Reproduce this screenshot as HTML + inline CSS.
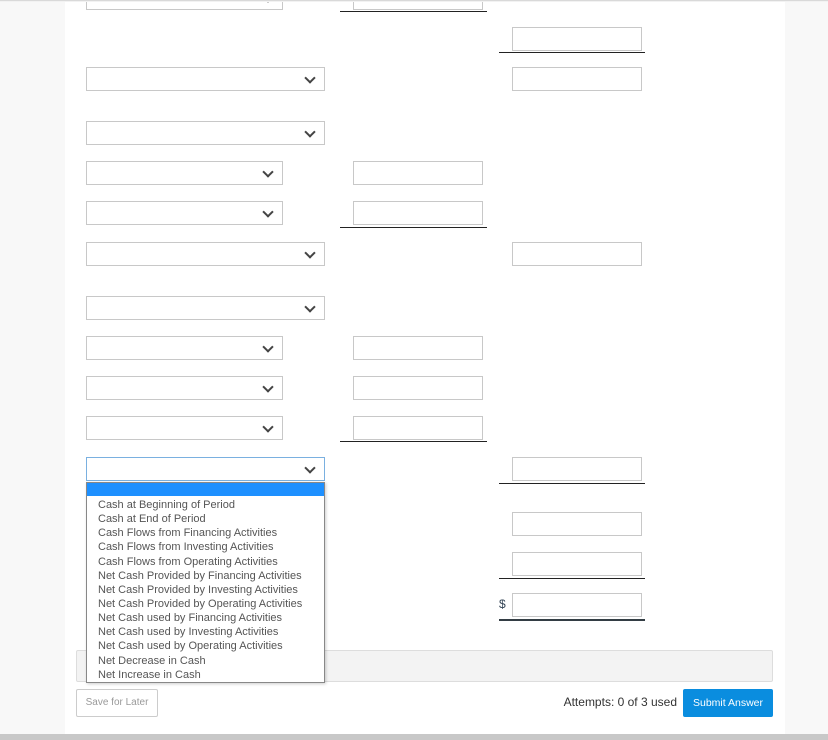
<!DOCTYPE html>
<html><head><style>
body{margin:0;width:828px;height:740px;background:#f8f8f8;position:relative;overflow:hidden;font-family:"Liberation Sans",sans-serif}
.main{position:absolute;left:65px;top:0;width:720px;height:734px;background:#fff}
.bb{position:absolute;left:0;top:734px;width:828px;height:6px;background:#c8c8c8}
.top{position:absolute;left:0;top:0;width:828px;height:2px;background:linear-gradient(#ccc,#fff)}
.s,.i{position:absolute;box-sizing:border-box;height:24px;border:1px solid #c8c8c8;background:#fff}
.s::after{content:"";position:absolute;right:10px;top:6px;width:6px;height:6px;border-right:2px solid #444;border-bottom:2px solid #444;transform:rotate(45deg)}
.sw{left:86px;width:239px}.sn{left:86px;width:197px}
.im{left:353px;width:130px}.ir{left:512px;width:130px}
.l{position:absolute;height:1px;background:#222}
.lm{left:340px;width:147px}.lr{left:499px;width:146px}
.dd{position:absolute;left:86px;top:482px;width:239px;height:201px;box-sizing:border-box;border:1px solid #888;background:#fff;font-size:11px;color:#555;box-shadow:1px 1px 3px rgba(0,0,0,.2)}
.dd div{height:14.15px;line-height:14px;padding-left:11px;white-space:nowrap}
.dd .h{background:#1e90ff;height:13px;margin-bottom:2px}
</style></head><body>
<div class="main"></div><div class="bb"></div>
<div class="s sn" style="top:-14px"></div><div class="i im" style="top:-14px"></div><div class="l lm" style="top:11px"></div>
<div class="top"></div>
<div class="i ir" style="top:27px"></div><div class="l lr" style="top:52px"></div>
<div class="s sw" style="top:67px"></div><div class="i ir" style="top:67px"></div>
<div class="s sw" style="top:121px"></div>
<div class="s sn" style="top:161px"></div><div class="i im" style="top:161px"></div>
<div class="s sn" style="top:201px"></div><div class="i im" style="top:201px"></div><div class="l lm" style="top:227px"></div>
<div class="s sw" style="top:242px"></div><div class="i ir" style="top:242px"></div>
<div class="s sw" style="top:296px"></div>
<div class="s sn" style="top:336px"></div><div class="i im" style="top:336px"></div>
<div class="s sn" style="top:376px"></div><div class="i im" style="top:376px"></div>
<div class="s sn" style="top:416px"></div><div class="i im" style="top:416px"></div><div class="l lm" style="top:441px"></div>
<div class="s sw" style="top:457px;border-color:#7ab0e0"></div><div class="i ir" style="top:457px"></div><div class="l lr" style="top:483px"></div>
<div class="i ir" style="top:512px"></div>
<div class="i ir" style="top:552px"></div><div class="l lr" style="top:578px"></div>
<div style="position:absolute;left:499px;top:597px;font-size:12px;color:#345">$</div>
<div class="i ir" style="top:593px"></div><div class="l lr" style="top:619px;height:2px;background:#333d44"></div>
<div style="position:absolute;left:76px;top:650px;width:697px;height:32px;box-sizing:border-box;background:#f3f3f3;border:1px solid #ddd;border-radius:2px"></div>
<div class="dd"><div class="h"></div><div>Cash at Beginning of Period</div><div>Cash at End of Period</div><div>Cash Flows from Financing Activities</div><div>Cash Flows from Investing Activities</div><div>Cash Flows from Operating Activities</div><div>Net Cash Provided by Financing Activities</div><div>Net Cash Provided by Investing Activities</div><div>Net Cash Provided by Operating Activities</div><div>Net Cash used by Financing Activities</div><div>Net Cash used by Investing Activities</div><div>Net Cash used by Operating Activities</div><div>Net Decrease in Cash</div><div>Net Increase in Cash</div></div>
<div style="position:absolute;left:76px;top:689px;width:82px;height:28px;box-sizing:border-box;border:1px solid #ccc;border-radius:2px;font-size:10px;color:#999;text-align:center;line-height:26px">Save for Later</div>
<div style="position:absolute;right:151px;top:695px;font-size:12px;line-height:14px;color:#333">Attempts: 0 of 3 used</div>
<div style="position:absolute;left:683px;top:689px;width:90px;height:28px;background:#0a8ddf;border-radius:2px;color:#fff;font-size:10.5px;text-align:center;line-height:28px">Submit Answer</div>
</body></html>
